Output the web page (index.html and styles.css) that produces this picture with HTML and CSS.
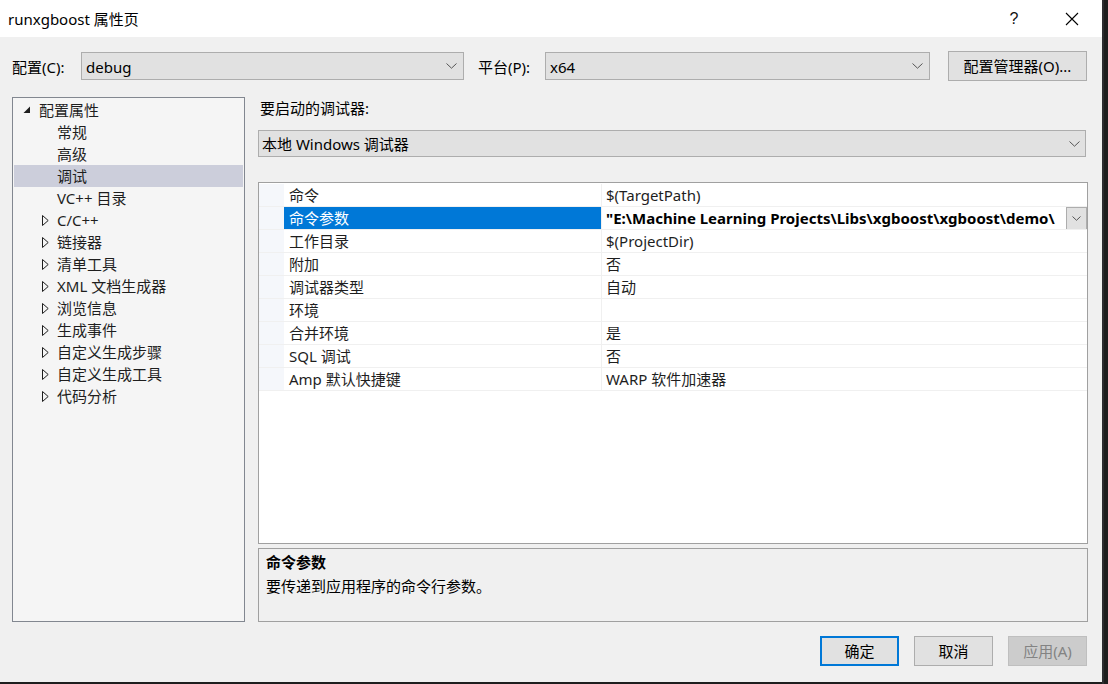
FILE: index.html
```html
<!DOCTYPE html>
<html lang="zh-CN">
<head>
<meta charset="utf-8">
<title>runxgboost 属性页</title>
<link rel="stylesheet" href="styles.css">
</head>
<body>
<div class="screen">
  <div class="window">
    <div class="titlebar">
      <div class="title">runxgboost 属性页</div>
      <div class="title-help">?</div>
      <div class="title-close">
        <svg width="14" height="14" viewBox="0 0 14 14"><path d="M1 1 L13 13 M13 1 L1 13" stroke="#000" stroke-width="1.1" fill="none"/></svg>
      </div>
    </div>

    <div class="toolbar">
      <span class="tb-label">配置(C):</span>
      <div class="combo combo-config">
        <span class="combo-text">debug</span>
        <svg class="chev" width="11" height="6" viewBox="0 0 11 6"><path d="M0.5 0.5 L5.5 5.2 L10.5 0.5" stroke="#555" stroke-width="1" fill="none"/></svg>
      </div>
      <span class="tb-label tb-label-platform">平台(P):</span>
      <div class="combo combo-platform">
        <span class="combo-text">x64</span>
        <svg class="chev" width="11" height="6" viewBox="0 0 11 6"><path d="M0.5 0.5 L5.5 5.2 L10.5 0.5" stroke="#555" stroke-width="1" fill="none"/></svg>
      </div>
      <button class="btn btn-manager">配置管理器(O)...</button>
    </div>

    <div class="main">
      <div class="tree">
        <div class="tree-row lvl0">
          <svg class="tri" width="8" height="8" viewBox="0 0 8 8"><path d="M7 0.5 L7 7 L0.5 7 Z" fill="#1e1e1e"/></svg>
          <span>配置属性</span>
        </div>
        <div class="tree-row lvl1"><span>常规</span></div>
        <div class="tree-row lvl1"><span>高级</span></div>
        <div class="tree-row lvl1 selected"><span>调试</span></div>
        <div class="tree-row lvl1"><span>VC++ 目录</span></div>
        <div class="tree-row lvl1 has-child"><svg class="tri-c" width="7" height="11" viewBox="0 0 7 11"><path d="M0.5 0.5 L6.2 5.5 L0.5 10.5 Z" fill="none" stroke="#1e1e1e" stroke-width="1"/></svg><span>C/C++</span></div>
        <div class="tree-row lvl1 has-child"><svg class="tri-c" width="7" height="11" viewBox="0 0 7 11"><path d="M0.5 0.5 L6.2 5.5 L0.5 10.5 Z" fill="none" stroke="#1e1e1e" stroke-width="1"/></svg><span>链接器</span></div>
        <div class="tree-row lvl1 has-child"><svg class="tri-c" width="7" height="11" viewBox="0 0 7 11"><path d="M0.5 0.5 L6.2 5.5 L0.5 10.5 Z" fill="none" stroke="#1e1e1e" stroke-width="1"/></svg><span>清单工具</span></div>
        <div class="tree-row lvl1 has-child"><svg class="tri-c" width="7" height="11" viewBox="0 0 7 11"><path d="M0.5 0.5 L6.2 5.5 L0.5 10.5 Z" fill="none" stroke="#1e1e1e" stroke-width="1"/></svg><span>XML 文档生成器</span></div>
        <div class="tree-row lvl1 has-child"><svg class="tri-c" width="7" height="11" viewBox="0 0 7 11"><path d="M0.5 0.5 L6.2 5.5 L0.5 10.5 Z" fill="none" stroke="#1e1e1e" stroke-width="1"/></svg><span>浏览信息</span></div>
        <div class="tree-row lvl1 has-child"><svg class="tri-c" width="7" height="11" viewBox="0 0 7 11"><path d="M0.5 0.5 L6.2 5.5 L0.5 10.5 Z" fill="none" stroke="#1e1e1e" stroke-width="1"/></svg><span>生成事件</span></div>
        <div class="tree-row lvl1 has-child"><svg class="tri-c" width="7" height="11" viewBox="0 0 7 11"><path d="M0.5 0.5 L6.2 5.5 L0.5 10.5 Z" fill="none" stroke="#1e1e1e" stroke-width="1"/></svg><span>自定义生成步骤</span></div>
        <div class="tree-row lvl1 has-child"><svg class="tri-c" width="7" height="11" viewBox="0 0 7 11"><path d="M0.5 0.5 L6.2 5.5 L0.5 10.5 Z" fill="none" stroke="#1e1e1e" stroke-width="1"/></svg><span>自定义生成工具</span></div>
        <div class="tree-row lvl1 has-child"><svg class="tri-c" width="7" height="11" viewBox="0 0 7 11"><path d="M0.5 0.5 L6.2 5.5 L0.5 10.5 Z" fill="none" stroke="#1e1e1e" stroke-width="1"/></svg><span>代码分析</span></div>
      </div>

      <div class="content">
        <div class="dbg-label">要启动的调试器:</div>
        <div class="combo combo-debugger">
          <span class="combo-text">本地 Windows 调试器</span>
          <svg class="chev" width="11" height="6" viewBox="0 0 11 6"><path d="M0.5 0.5 L5.5 5.2 L10.5 0.5" stroke="#555" stroke-width="1" fill="none"/></svg>
        </div>

        <div class="grid">
          <div class="grid-rows">
            <div class="prow"><div class="pmargin"></div><div class="pname">命令</div><div class="pval">$(TargetPath)</div></div>
            <div class="prow sel"><div class="pmargin"></div><div class="pname">命令参数</div><div class="pval bold"><span class="pval-text">"E:\Machine Learning Projects\Libs\xgboost\xgboost\demo\</span><span class="pdrop"><svg width="9" height="5" viewBox="0 0 9 5"><path d="M0.5 0.5 L4.5 4.3 L8.5 0.5" stroke="#555" stroke-width="1" fill="none"/></svg></span></div></div>
            <div class="prow"><div class="pmargin"></div><div class="pname">工作目录</div><div class="pval">$(ProjectDir)</div></div>
            <div class="prow"><div class="pmargin"></div><div class="pname">附加</div><div class="pval">否</div></div>
            <div class="prow"><div class="pmargin"></div><div class="pname">调试器类型</div><div class="pval">自动</div></div>
            <div class="prow"><div class="pmargin"></div><div class="pname">环境</div><div class="pval"></div></div>
            <div class="prow"><div class="pmargin"></div><div class="pname">合并环境</div><div class="pval">是</div></div>
            <div class="prow"><div class="pmargin"></div><div class="pname">SQL 调试</div><div class="pval">否</div></div>
            <div class="prow"><div class="pmargin"></div><div class="pname">Amp 默认快捷键</div><div class="pval">WARP 软件加速器</div></div>
          </div>
        </div>

        <div class="desc">
          <div class="desc-title">命令参数</div>
          <div class="desc-text">要传递到应用程序的命令行参数。</div>
        </div>
      </div>
    </div>

    <div class="footer">
      <button class="btn btn-ok">确定</button>
      <button class="btn">取消</button>
      <button class="btn btn-disabled">应用(A)</button>
    </div>
  </div>
  <div class="edge-right"></div>
</div>
</body>
</html>
```

FILE: styles.css
```css
* { box-sizing: border-box; }
html, body { margin: 0; padding: 0; }
body {
  width: 1108px;
  height: 684px;
  overflow: hidden;
  background: #1e1e1e;
  font-family: "Noto Sans", "Noto Sans CJK SC", sans-serif;
  font-size: 15px;
  color: #000;
}
.screen { display: flex; width: 1108px; height: 684px; }
.window {
  width: 1102px;
  height: 682px;
  background: #f0f0f0;
  display: flex;
  flex-direction: column;
}
.edge-right { width: 6px; height: 684px; background: #1e1e1e; border-left: 2px solid #2d2d30; }

.titlebar {
  height: 37px;
  background: #fff;
  display: flex;
  align-items: center;
  flex-shrink: 0;
}
.title { padding-left: 8px; flex: 1; font-size: 15px; line-height: 20px; }
.title-help { width: 20px; text-align: center; font-size: 16px; margin-right: 41px; font-family: "Liberation Sans", sans-serif; color: #111; }
.title-close { width: 14px; height: 14px; margin-right: 23px; display: flex; }

.toolbar {
  display: flex;
  align-items: center;
  height: 30px;
  margin-top: 14px;
  padding-left: 12px;
  flex-shrink: 0;
}
.tb-label { width: 69px; line-height: 20px; padding-top: 1px; }
.tb-label-platform { width: 67px; margin-left: 14px; }
.combo {
  height: 28px;
  background: #e1e1e1;
  border: 1px solid #adadad;
  display: flex;
  align-items: center;
  padding-left: 4px;
  padding-right: 6px;
}
.combo-text { flex: 1; line-height: 20px; white-space: nowrap; padding-top: 1px; }
.chev { flex-shrink: 0; }
.combo-config { width: 383px; }
.combo-platform { width: 385px; }
.btn {
  font-family: inherit;
  font-size: 15px;
  height: 30px;
  width: 79px;
  background: #e1e1e1;
  border: 1px solid #adadad;
  color: #000;
  padding: 0;
  line-height: 20px;
}
.btn-manager { width: 139px; margin-left: 18px; }

.main {
  display: flex;
  margin-top: 16px;
  padding-left: 12px;
  height: 525px;
  flex-shrink: 0;
}
.tree {
  width: 233px;
  height: 525px;
  background: #f5f5f5;
  border: 1px solid #828790;
  padding-top: 1px;
}
.tree-row {
  height: 22px;
  line-height: 22px;
  display: flex;
  align-items: center;
  white-space: nowrap;
  color: #1e1e1e;
}
.tree-row.lvl0 { padding-left: 10px; }
.tree-row.lvl0 .tri { margin-right: 8px; margin-top: -1px; }
.tree-row.lvl1 { padding-left: 44px; }
.tree-row.has-child { padding-left: 29px; }
.tree-row .tri-c { margin-right: 8px; }
.tree-row.selected { background: #cccedb; margin: 0 1px; padding-left: 43px; }

.content {
  width: 830px;
  margin-left: 13px;
  display: flex;
  flex-direction: column;
}
.dbg-label { height: 22px; line-height: 22px; padding-left: 2px; }
.combo-debugger { width: 828px; height: 27px; margin-top: 11px; padding-left: 3px; padding-right: 5px; }

.grid {
  margin-top: 25px;
  height: 362px;
  background: #fff;
  border: 1px solid #a0a0a0;
}
.grid-rows { padding-top: 1px; }
.prow {
  display: flex;
  height: 23px;
  border-bottom: 1px solid #f0f0f0;
}
.pmargin { width: 25px; background: #f5f7fb; flex-shrink: 0; }
.pname {
  width: 318px;
  padding-left: 5px;
  line-height: 23px;
  border-right: 1px solid #f0f0f0;
  white-space: nowrap;
  color: #1e1e1e;
  flex-shrink: 0;
}
.pval {
  flex: 1;
  padding-left: 4px;
  line-height: 23px;
  white-space: nowrap;
  overflow: hidden;
  display: flex;
  color: #1e1e1e;
  min-width: 0;
}
.prow.sel .pname { background: #0078d7; color: #fff; }
.pval.bold { font-weight: bold; color: #000; padding-right: 0; }
.pval-text { flex: 1; overflow: hidden; min-width: 0; }
.pdrop {
  width: 21px;
  height: 23px;
  background: #e1e1e1;
  border: 1px solid #adadad;
  display: flex;
  align-items: center;
  justify-content: center;
  flex-shrink: 0;
}

.desc {
  margin-top: 4px;
  height: 74px;
  border: 1px solid #a0a0a0;
  background: #f0f0f0;
  padding-left: 7px;
  padding-top: 2px;
}
.desc-title { font-weight: bold; line-height: 22px; }
.desc-text { line-height: 26px; }

.footer {
  display: flex;
  justify-content: flex-end;
  gap: 15px;
  padding-right: 15px;
  margin-top: 14px;
}
.btn-ok { border: 2px solid #0078d7; }
.btn-disabled { background: #cccccc; border-color: #bfbfbf; color: #838383; }
```
